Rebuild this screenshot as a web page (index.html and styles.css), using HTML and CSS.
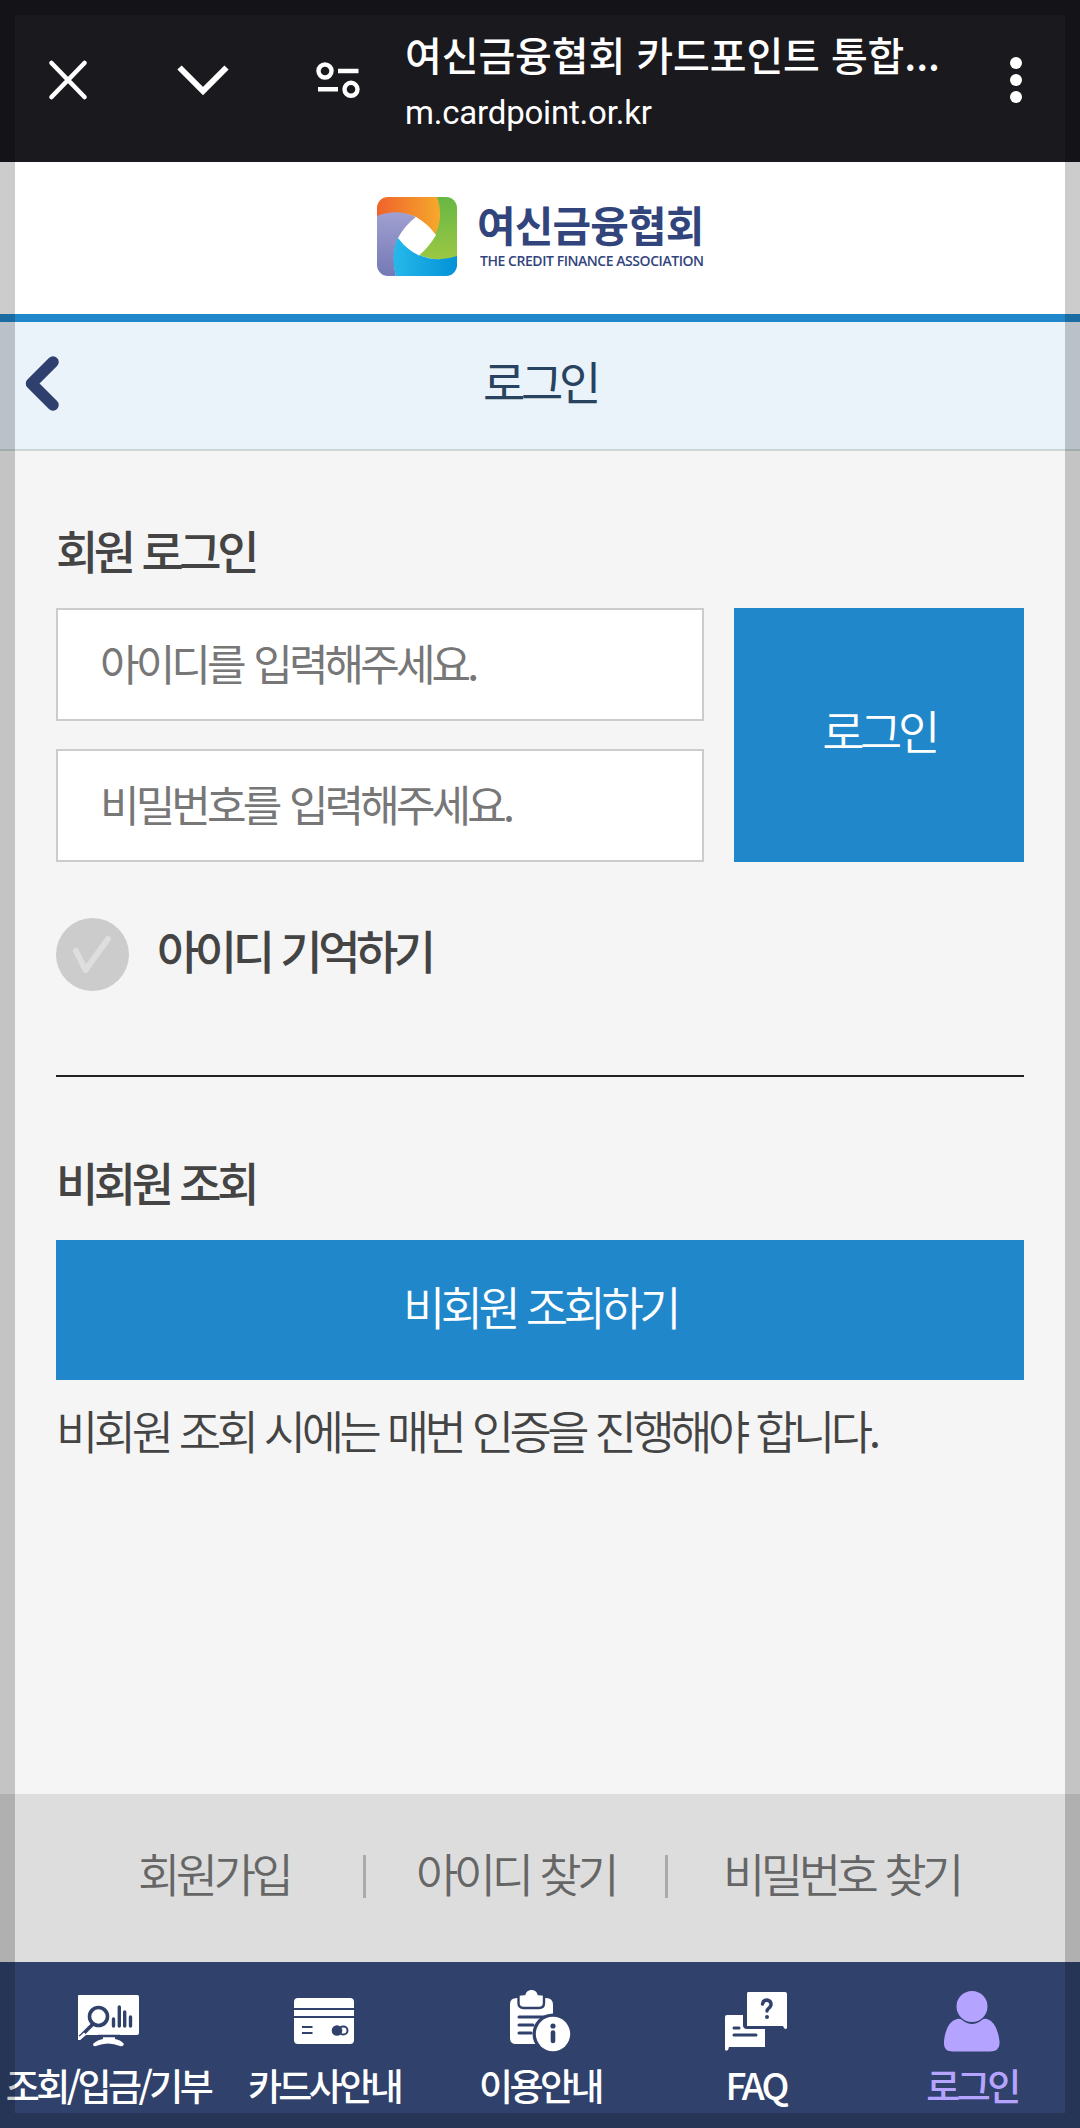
FILE: index.html
```html
<!DOCTYPE html>
<html lang="ko">
<head>
<meta charset="utf-8">
<meta name="viewport" content="width=device-width, initial-scale=1">
<title>여신금융협회 카드포인트 통합조회</title>
<link rel="stylesheet" href="styles.css">
</head>
<body>
<div class="screen">
  <header class="browser">
    <svg class="browser-tools" width="400" height="162" viewBox="0 0 400 162" fill="none" stroke="#fff">
      <path d="M51.500 63 84.500 97M84.500 63 51.500 97" stroke-width="4.600" stroke-linecap="round"/>
      <path d="M179.500 67.500 203 91 226.500 67.500" stroke-width="6"/>
      <g stroke-width="4.400"><circle cx="325" cy="71" r="6.500"/><path d="M338 71H358.500M318 89.300H338"/><circle cx="351" cy="89.300" r="6.500"/></g>
    </svg>
    <div class="page-info">
      <div class="page-title">여신금융협회 카드포인트 통합...</div>
      <div class="page-url">m.cardpoint.or.kr</div>
    </div>
    <svg class="browser-menu" width="20" height="60" viewBox="0 0 20 60" fill="#fff"><circle cx="10" cy="13" r="6"/><circle cx="10" cy="30" r="6"/><circle cx="10" cy="47" r="6"/></svg>
  </header>

  <div class="brand">
    <svg class="brand-mark" width="80" height="80" viewBox="0 0 80 80">
      <defs>
        <clipPath id="tile"><rect width="80" height="79" rx="11"/></clipPath>
        <linearGradient id="orange"><stop offset="0" stop-color="#f0622b"/><stop offset="1" stop-color="#f6a92c"/></linearGradient>
        <linearGradient id="green" x2="0" y2="1"><stop offset="0" stop-color="#68b744"/><stop offset="1" stop-color="#9bc843"/></linearGradient>
        <linearGradient id="cyan"><stop offset="0" stop-color="#27b8ea"/><stop offset="1" stop-color="#0292d7"/></linearGradient>
        <linearGradient id="violet" x2="0" y2="1"><stop offset="0" stop-color="#a09fd0"/><stop offset="1" stop-color="#7479b5"/></linearGradient>
      </defs>
      <g clip-path="url(#tile)">
        <path fill="url(#green)" d="M58 0H80V60Q62 66 42 58L58 37Z"/>
        <path fill="url(#orange)" d="M0 0H60Q67 20 58 38L39 20Q20 12 0 20Z"/>
        <path fill="url(#violet)" d="M0 19Q20 11 39 20L21 41Q14 56 19 80H0Z"/>
        <path fill="url(#cyan)" d="M21 40 42 58Q60 66 80 59V80H19Q13 58 21 40Z"/>
        <path fill="#fff" d="M39 20Q50 26 59 38 52 50 42 58.500 30 53 21 41 28 28 39 20Z"/>
      </g>
    </svg>
    <div class="brand-text">
      <div class="brand-ko">여신금융협회</div>
      <div class="brand-en">THE CREDIT FINANCE ASSOCIATION</div>
    </div>
  </div>

  <div class="title-bar">
    <svg class="back" width="40" height="64" viewBox="0 0 40 64" fill="none" stroke="#2f406e" stroke-width="11.500" stroke-linecap="round" stroke-linejoin="round"><path d="M30 12 8.500 33.500 30 55"/></svg>
    <h1 class="title">로그인</h1>
  </div>

  <main class="content">
    <h2 class="heading">회원 로그인</h2>
    <div class="login">
      <div class="fields">
        <div class="field">아이디를 입력해주세요.</div>
        <div class="field">비밀번호를 입력해주세요.</div>
      </div>
      <div class="button login-button">로그인</div>
    </div>
    <div class="remember">
      <svg width="73" height="73" viewBox="0 0 73 73" fill="none"><circle cx="36.500" cy="36.500" r="36.500" fill="#ccc"/><path d="M20 33 29.500 52 52 21" stroke="#dedede" stroke-width="6" stroke-linecap="round" stroke-linejoin="round"/></svg>
      <span class="remember-label">아이디 기억하기</span>
    </div>
    <div class="rule"></div>
    <h2 class="heading guest-heading">비회원 조회</h2>
    <div class="button guest-button">비회원 조회하기</div>
    <p class="note">비회원 조회 시에는 매번 인증을 진행해야 합니다.</p>
  </main>

  <div class="links">
    <span class="link join">회원가입</span><i class="bar"></i>
    <span class="link find-id">아이디 찾기</span><i class="bar"></i>
    <span class="link find-pw">비밀번호 찾기</span>
  </div>

  <nav class="tabs">
    <div class="tab">
      <svg class="tab-icon" width="64" height="64" viewBox="0 0 64 64">
        <path fill="#fff" d="M2.500 5H61.500Q63 5 63 7V43Q63 45 61 45H39V49Q45 50 48 54 47 57 44 56 32 51 20 56 17 57 17 54 21 50 27 49V45H10L4 50H2V7Q2 5 2.500 5Z"/>
        <g fill="none" stroke="#30416b"><circle cx="22.500" cy="26.500" r="9" stroke-width="3.600"/><path d="M17 34 4 47" stroke-width="3.600"/><path d="M37.500 29V36M43.300 17V36M48.700 22V36M54.500 27V36" stroke-width="3.400" stroke-linecap="round"/><path d="M22 46H44" stroke-width="2.500"/></g>
        <path stroke="#fff" stroke-width="3" d="M9 43.500 3 49"/>
      </svg>
      <span>조회/입금/기부</span>
    </div>
    <div class="tab">
      <svg class="tab-icon" width="64" height="64" viewBox="0 0 64 64">
        <rect x="2" y="8" width="60" height="46" rx="4" fill="#fff"/>
        <g stroke="#30416b" stroke-width="2" fill="none"><path d="M2 19H62M2 27H62M10 37H20.500M10 43H20.500"/><rect x="47" y="36.500" width="8.500" height="8" rx="4"/></g><circle cx="45" cy="40.500" r="5.300" fill="#30416b"/>
      </svg>
      <span>카드사안내</span>
    </div>
    <div class="tab">
      <svg class="tab-icon" width="64" height="64" viewBox="0 0 64 64">
        <path fill="#fff" d="M9 8H38Q45 8 45 15V54H8Q2 54 2 48V14Q2 8 9 8Z"/>
        <path fill="#fff" stroke="#30416b" stroke-width="2.400" d="M10.500 5Q12 4 16.500 4 18-1 23.500-1 29-1 30.500 4 35 4 36 5V13Q36 18 31 18H15.500Q10.500 18 10.500 13Z"/>
        <path fill="#30416b" d="M8 -3H39V4H31Q28-1 23.500-1 19-1 16 4H8Z"/>
        <circle cx="23.500" cy="6" r="6" fill="#fff"/>
        <path stroke="#30416b" stroke-width="3" stroke-linecap="round" d="M11 27H36M11 35H25M11 43H23"/>
        <circle cx="45" cy="44" r="20.500" fill="#30416b"/><circle cx="45" cy="44" r="17.200" fill="#fff"/>
        <circle cx="45" cy="36" r="2.600" fill="#30416b"/><path stroke="#30416b" stroke-width="4.600" stroke-linecap="round" d="M45 42.500V51"/>
      </svg>
      <span>이용안내</span>
    </div>
    <div class="tab">
      <svg class="tab-icon" width="64" height="64" viewBox="0 0 64 64">
        <path fill="#fff" d="M1 27Q1 25 3 25H41V57H5L4 60Q1 62 1 59Z"/>
        <path stroke="#30416b" stroke-width="3" stroke-linecap="round" d="M10 38H15M10 45H32"/>
        <path fill="#30416b" d="M19 -1H64V39H23Q19 39 19 35Z"/>
        <path fill="#fff" d="M24 2H61Q63 2 63 4V38Q62 40 60 38L59 36H23V4Q23 2 24 2Z"/>
        <path fill="none" stroke="#30416b" stroke-width="3.400" stroke-linecap="round" d="M38.500 14Q39 10 43 10 47.500 11 47 15 46.500 17 44 19 43 20 43 21"/><circle cx="43" cy="27" r="2" fill="#30416b"/>
      </svg>
      <span class="faq">FAQ</span>
    </div>
    <div class="tab active">
      <svg class="tab-icon" width="64" height="64" viewBox="0 0 64 64" fill="#b5a4ff">
        <path d="M17 29Q20 28 22 30 32 38 42 30 44 28 47 29 57 32 59.500 51V54Q59 61.500 50 61.500H13Q4 61.500 4 54V51Q6 32 17 29Z"/><circle cx="32" cy="16.500" r="15.500"/>
      </svg>
      <span>로그인</span>
    </div>
  </nav>
  <div class="frame"></div>
</div>
</body>
</html>
```
FILE: styles.css
```css
* { box-sizing: border-box; }
body { margin: 0; font-family: "Noto Sans CJK KR", sans-serif; color: #444; }
h1, h2, p { margin: 0; font-weight: 400; }
svg { display: block; flex: none; overflow: visible; }
.screen { position: relative; width: 1080px; height: 2128px; display: flex; flex-direction: column; background: #f5f5f5; white-space: nowrap; overflow: hidden; }
.frame { position: absolute; inset: 0; border: 15px solid rgba(0, 0, 0, .2); pointer-events: none; }

.browser { height: 162px; display: flex; background: #1a191e; color: #fff; }
.page-info { width: 595px; padding: 27px 0 0 5px; }
.page-title { font-size: 40px; line-height: 54px; font-weight: 500; letter-spacing: -.1px; }
.page-url { font-family: Roboto, sans-serif; font-size: 33px; line-height: 64px; letter-spacing: -.2px; }
.browser-menu { margin: 50px 0 0 11px; }

.brand { height: 160px; display: flex; background: #fff; border-bottom: 8px solid #2187cb; padding: 35px 0 0 377px; gap: 20px; }
.brand-text { color: #32447c; }
.brand-ko { font-size: 42px; line-height: 54px; font-weight: 700; letter-spacing: -.9px; }
.brand-en { font-family: "Open Sans", sans-serif; font-size: 14px; line-height: 20px; font-weight: 600; letter-spacing: -.45px; padding-left: 3px; }

.title-bar { height: 129px; display: grid; grid-template-columns: 62px 1fr 62px; background: #eaf2fa; border-bottom: 2px solid #cbd8da; }
.back { margin: 28px 0 0 23px; }
.title { text-align: center; font-size: 46px; line-height: 116px; letter-spacing: -4.400px; color: #274360; font-weight: 400; }

.content { flex: 1; padding: 58px 56px 0; }
.heading { font-size: 46px; line-height: 80px; letter-spacing: -4.500px; word-spacing: 1.500px; font-weight: 500; }
.login { display: grid; grid-template-columns: 648px 290px; gap: 30px; margin-top: 19px; }
.fields { display: grid; gap: 28px; }
.field { height: 113px; border: 2px solid #ccc; background: #fff; padding-left: 42px; font-size: 43px; line-height: 104px; letter-spacing: -3.900px; word-spacing: 2.500px; color: #777; }
.button { background: #2187cb; color: #fff; text-align: center; font-size: 46px; letter-spacing: -4.500px; word-spacing: 1px; font-weight: 350; }
.login-button { line-height: 242px; }
.remember { display: flex; gap: 28px; margin-top: 56px; }
.remember-label { font-size: 46px; line-height: 62px; letter-spacing: -4.500px; word-spacing: 1.500px; font-weight: 500; }
.rule { height: 2px; background: #222; margin-top: 84px; }
.guest-heading { margin-top: 64px; }
.guest-button { height: 140px; line-height: 130px; margin-top: 19px; }
.note { font-size: 46px; line-height: 80px; letter-spacing: -4.500px; word-spacing: 1px; margin-top: 9px; font-weight: 350; }

.links { height: 168px; display: flex; align-items: flex-start; background: #ddd; color: #666; font-size: 46px; letter-spacing: -4.500px; word-spacing: 1.500px; font-weight: 350; line-height: 157px; padding-left: 138px; }
.join { width: 225px; }
.find-id { width: 249px; margin-left: 50px; }
.find-pw { margin-left: 55px; }
.bar { width: 3px; height: 43px; margin-top: 61px; background: #aaa; }

.tabs { height: 166px; display: grid; grid-template-columns: repeat(5, 216px); background: #30416b; color: #fff; font-size: 37px; letter-spacing: -3.600px; font-weight: 500; padding-top: 28px; }
.tab { display: flex; flex-direction: column; align-items: center; }
.tab span { line-height: 62px; }
.tab .faq { font-weight: 500; font-size: 37px; letter-spacing: -2.900px; line-height: 61px; }
.active { color: #b5a4ff; }
```
